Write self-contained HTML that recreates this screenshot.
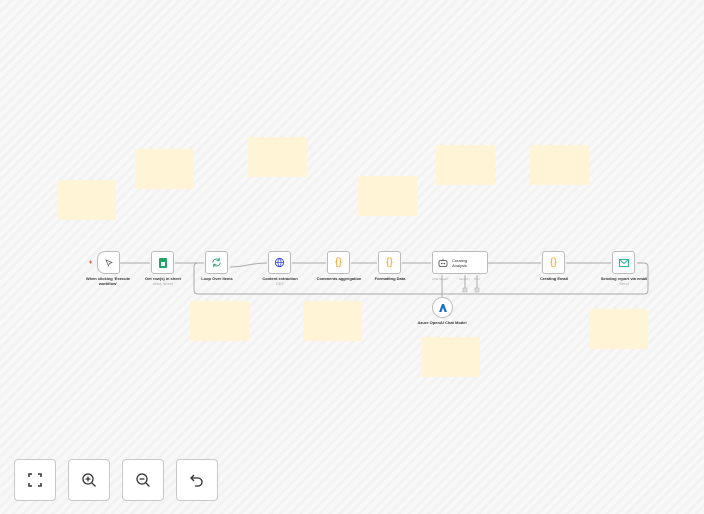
<!DOCTYPE html>
<html><head><meta charset="utf-8"><style>
*{margin:0;padding:0;box-sizing:border-box}
body{width:704px;height:514px;overflow:hidden;position:relative;font-family:"Liberation Sans",sans-serif;
background:#f6f6f6;background-image:repeating-linear-gradient(135deg,#f2f2f2 0 3px,#f8f8f8 3px 7px)}
.st{position:absolute;width:59px;height:40px;background:#fff4d6;border-radius:2px}
.n{position:absolute;top:251px;width:23px;height:23px;background:#fff;border:1px solid #bbb;border-radius:3px;display:flex;align-items:center;justify-content:center}
.lb{position:absolute;font-size:4px;color:#333;text-align:center;width:50px;font-weight:bold;line-height:5px}
.sub{color:#aaa;font-weight:normal;display:block}
.btn{position:absolute;top:459px;width:42px;height:42px;background:#fff;border:1px solid #c8c8c8;border-radius:4px;display:flex;align-items:center;justify-content:center}
svg.c{position:absolute;left:0;top:0}
</style></head><body>
<div class="st" style="left:57px;top:180px"></div>
<div class="st" style="left:135px;top:149px"></div>
<div class="st" style="left:248px;top:137px"></div>
<div class="st" style="left:358px;top:176px"></div>
<div class="st" style="left:436px;top:145px"></div>
<div class="st" style="left:530px;top:145px"></div>
<div class="st" style="left:190px;top:301px"></div>
<div class="st" style="left:303px;top:301px"></div>
<div class="st" style="left:421px;top:337px"></div>
<div class="st" style="left:589px;top:309px"></div>

<svg class="c" width="704" height="514" fill="none" stroke="#aaa" stroke-width="1">
<path d="M120 263H150M175 263H204M230 267C245 267 250 263 267 263M292 263H326M351 263H377M402 263H431M488 263H541M566 263H611"/>
<path d="M637 263H644Q648 263 648 267V290Q648 294 644 294H198Q194 294 194 290V267Q194 263 198 263H204"/>
<path d="M442 275V297M465 275V289M477 275V289"/>
<rect x="463" y="288" width="4" height="4" fill="#ddd" stroke="#aaa" stroke-width=".5"/>
<rect x="475" y="288" width="4" height="4" fill="#ddd" stroke="#aaa" stroke-width=".5"/>
<path d="M89 262h3M90.5 260.5v3" stroke="#e55"/>
</svg>

<div class="n" style="left:97px;border-radius:8px 3px 3px 8px">
<svg width="10" height="10" viewBox="0 0 10 10"><path d="M2 2L8 4.5 5.5 5.5 4.5 8Z" fill="none" stroke="#555" stroke-width=".7"/></svg></div>
<div class="lb" style="left:83px;top:276px">When clicking 'Execute workflow'</div>
<div class="n" style="left:151px"><svg width="8" height="10"><rect x="0" y="0" width="8" height="10" rx="1" fill="#23a566"/><rect x="2" y="4" width="4" height="4" fill="#fff"/></svg></div>
<div class="lb" style="left:138px;top:276px">Get row(s) in sheet<span class="sub">read: sheet</span></div>
<div class="n" style="left:205px"><svg width="11" height="11" viewBox="0 0 12 12"><path d="M2 6a4 4 0 0 1 7-2.5M10 6a4 4 0 0 1-7 2.5M9 1v3H6M3 11V8h3" fill="none" stroke="#2a9d7c" stroke-width="1"/></svg></div>
<div class="lb" style="left:192px;top:276px">Loop Over Items</div>
<div class="n" style="left:268px"><svg width="11" height="11" viewBox="0 0 12 12"><circle cx="6" cy="6" r="4.5" fill="none" stroke="#3a4ad8"/><path d="M1.5 6h9M6 1.5c-2.5 3-2.5 6 0 9M6 1.5c2.5 3 2.5 6 0 9" fill="none" stroke="#3a4ad8" stroke-width=".8"/></svg></div>
<div class="lb" style="left:255px;top:276px">Content extraction<span class="sub">GET</span></div>
<div class="n" style="left:327px;color:#f39c12;font-size:10px">{}</div>
<div class="lb" style="left:314px;top:276px">Comments aggregation</div>
<div class="n" style="left:378px;color:#f39c12;font-size:10px">{}</div>
<div class="lb" style="left:365px;top:276px">Formatting Data</div>
<div class="n" style="left:432px;width:56px;justify-content:flex-start;padding-left:5px">
<svg width="10" height="9" viewBox="0 0 10 9"><rect x="1" y="2.5" width="8" height="6" rx="1.5" fill="none" stroke="#444" stroke-width=".8"/><circle cx="3.7" cy="5.5" r=".8" fill="#444"/><circle cx="6.3" cy="5.5" r=".8" fill="#444"/><path d="M5 2.5V.8" stroke="#444" stroke-width=".8"/></svg>
<span style="font-size:4px;color:#333;margin-left:4px;line-height:5px">Creating<br>Analysis</span></div>
<div style="position:absolute;left:432px;top:277px;font-size:3px;color:#aaa">Chat Model<span style="color:#e55">*</span></div>
<div style="position:absolute;left:459px;top:277px;font-size:3px;color:#aaa">Memory</div>
<div style="position:absolute;left:474px;top:277px;font-size:3px;color:#aaa">Tool</div>
<div style="position:absolute;left:432px;top:297px;width:21px;height:21px;border-radius:50%;background:#fff;border:1px solid #bbb;display:flex;align-items:center;justify-content:center">
<svg width="8" height="8" viewBox="0 0 8 8"><path d="M0 8L3 0h2l3 8H5.5L4 3.5 2.5 8Z" fill="#1a6fc9"/></svg></div>
<div class="lb" style="left:417px;top:320px;width:50px">Azure OpenAI Chat Model</div>
<div class="n" style="left:542px;color:#f39c12;font-size:10px">{}</div>
<div class="lb" style="left:529px;top:276px">Creating Email</div>
<div class="n" style="left:612px"><svg width="10" height="8" viewBox="0 0 10 8"><rect x=".5" y=".5" width="9" height="7" fill="none" stroke="#26b59a"/><path d="M.5 .5L5 4.5 9.5 .5" fill="none" stroke="#26b59a"/></svg></div>
<div class="lb" style="left:594px;top:276px;width:60px">Sending report via email<span class="sub">Send</span></div>

<div class="btn" style="left:14px"><svg width="16" height="16" viewBox="0 0 16 16" fill="none" stroke="#333" stroke-width="1.5"><path d="M2 5V2h3M11 2h3v3M14 11v3h-3M5 14H2v-3"/></svg></div>
<div class="btn" style="left:68px"><svg width="16" height="16" viewBox="0 0 16 16" fill="none" stroke="#333" stroke-width="1.3"><circle cx="7" cy="7" r="5"/><path d="M11 11l3.5 3.5M7 4.5v5M4.5 7h5"/></svg></div>
<div class="btn" style="left:122px"><svg width="16" height="16" viewBox="0 0 16 16" fill="none" stroke="#333" stroke-width="1.3"><circle cx="7" cy="7" r="5"/><path d="M11 11l3.5 3.5M4.5 7h5"/></svg></div>
<div class="btn" style="left:176px"><svg width="16" height="16" viewBox="0 0 16 16" fill="none" stroke="#333" stroke-width="1.3"><path d="M5 3L2 6l3 3M2 6h7a4 4 0 0 1 0 8H6"/></svg></div>
</body></html>
